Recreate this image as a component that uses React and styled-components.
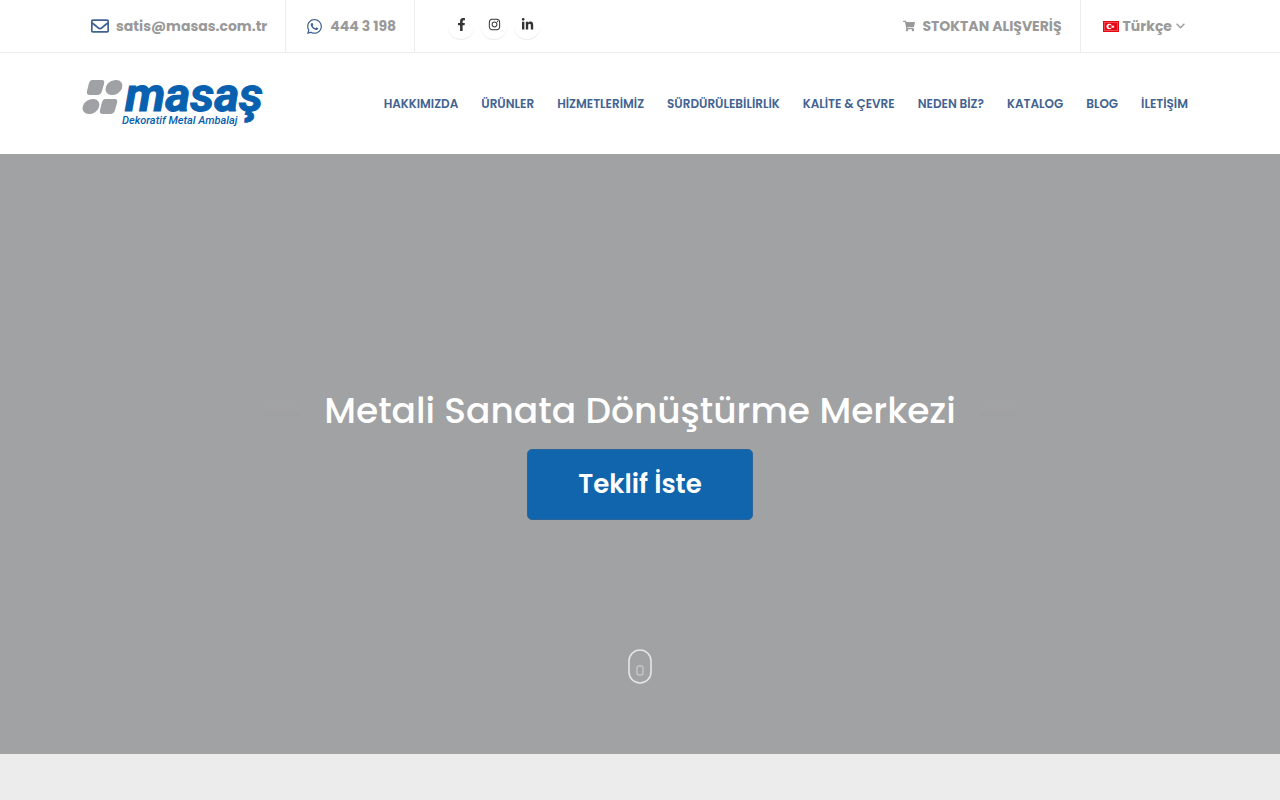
import React from "react";
import styled, { createGlobalStyle } from "styled-components";
import { FaFacebookF, FaInstagram, FaLinkedinIn, FaWhatsapp, FaRegEnvelope, FaShoppingCart } from "react-icons/fa";

const GlobalStyle = createGlobalStyle`
  *, *::before, *::after { box-sizing: border-box; }
  body {
    margin: 0;
    background: #ececec;
    font-family: Poppins, Inter, "Liberation Sans", sans-serif;
    color: #999;
  }
  a { color: inherit; text-decoration: none; }
`;

const Container = styled.div`
  display: flex;
  align-items: center;
  justify-content: space-between;
  width: 100%;
  max-width: 1140px;
  margin: 0 auto;
  padding: 0 12px;
`;

const TopBar = styled.div`
  background: #fff;
  border-bottom: 1px solid #ededed;
`;

const TopGroup = styled.div`
  display: flex;
  align-items: center;
  height: 52px;
`;

const TopLink = styled.a`
  display: flex;
  align-items: center;
  gap: 7px;
  height: 52px;
  padding: ${(p) => (p.$first ? "0 18px 0 9px" : "0 18px 0 20px")};
  border-right: 1px solid #ededed;
  font-size: 14px;
  font-weight: 700;
  line-height: 24px;
  white-space: nowrap;
  svg { color: ${(p) => p.$iconColor || "#999"}; flex: none; }
`;

const Socials = styled.div`
  display: flex;
  gap: 7px;
  margin-left: 33px;
`;

const SocialLink = styled.a`
  display: grid;
  place-items: center;
  width: 26px;
  height: 26px;
  border-radius: 50%;
  padding-bottom: 4px;
  color: #333;
  background: #fff;
  box-shadow: 0 1px 1px rgba(0, 0, 0, 0.08);
`;

const LanguageButton = styled.button`
  display: flex;
  align-items: center;
  gap: 4px;
  height: 52px;
  margin: 0;
  padding: 0 13px 0 22px;
  border: 0;
  background: none;
  color: #999;
  font: inherit;
  font-size: 14px;
  font-weight: 700;
  cursor: pointer;
`;

const Header = styled.header`
  background: #fff;
  padding: 22px 0;
`;

const LogoLink = styled.a`
  display: block;
  svg { display: block; overflow: visible; }
`;

const Nav = styled.nav`
  display: flex;
  gap: 23px;
  padding-right: 10px;
`;

const NavLink = styled.a`
  color: #426391;
  font-size: 12px;
  font-weight: 600;
  line-height: 20px;
  white-space: nowrap;
`;

const Hero = styled.section`
  display: flex;
  flex-direction: column;
  align-items: center;
  height: 600px;
  padding: 232px 20px 70px;
  background: #a1a2a3;
`;

const TitleRow = styled.div`
  display: flex;
  align-items: center;
  gap: 24px;
`;

const Dash = styled.span`
  width: 38px;
  height: 10px;
  border-radius: 2px;
  background: linear-gradient(#a3a3a5, #9fa0a2);
`;

const Title = styled.h1`
  margin: 0;
  color: #fff;
  font-size: 36px;
  font-weight: 500;
  line-height: 50px;
  text-align: center;
`;

const QuoteButton = styled.button`
  margin-top: 13px;
  padding: 0 50px;
  height: 71px;
  border: 1px solid #2b659c;
  border-radius: 5px;
  background: #1065ad;
  color: #fff;
  font: inherit;
  font-size: 26px;
  font-weight: 600;
  cursor: pointer;
`;

const ScrollLink = styled.a`
  margin-top: auto;
  svg { display: block; }
`;

const navItems = [
  "HAKKIMIZDA", "ÜRÜNLER", "HİZMETLERİMİZ", "SÜRDÜRÜLEBİLİRLİK", "KALİTE & ÇEVRE",
  "NEDEN BİZ?", "KATALOG", "BLOG", "İLETİŞİM",
];

const socials = [
  ["Facebook", FaFacebookF],
  ["Instagram", FaInstagram],
  ["LinkedIn", FaLinkedinIn],
];

function Logo() {
  return (
    <svg width="184" height="57" viewBox="0 0 184 57" role="img" aria-label="Masaş Dekoratif Metal Ambalaj">
      <g fill="#a0a1a5">
        <path d="M10 5h10q3 0 2 4l-2 7q-1 4-5 4H8q-4 0-3-4l2-8q1-3 3-3z" />
        <path d="M23 24h10q3 0 2 4l-2 7q-1 4-5 4h-7q-4 0-3-4l2-8q1-3 3-3z" />
        <ellipse cx="32" cy="12.500" rx="9" ry="7" transform="rotate(-32 32 12.500)" />
        <ellipse cx="9" cy="31.500" rx="9" ry="7" transform="rotate(-32 9 31.500)" />
      </g>
      <text x="43" y="36" fill="#0860ae" stroke="#0860ae" strokeWidth="1" fontFamily="Roboto, 'Open Sans', sans-serif" fontSize="48" fontWeight="700" fontStyle="italic">masaş</text>
      <text x="40" y="49" fill="#0860ae" fontFamily="Roboto, sans-serif" fontSize="11" fontWeight="500" fontStyle="italic">Dekoratif Metal Ambalaj</text>
    </svg>
  );
}

function TurkishFlag() {
  return (
    <svg width="16" height="11" viewBox="0 0 16 11" aria-hidden="true">
      <rect width="16" height="11" fill="#e30a17" />
      <rect x="1.500" y="1.500" width="13" height="8" fill="none" stroke="#f4474d" strokeWidth="1" />
      <circle cx="6.200" cy="5.500" r="2.700" fill="#fff" />
      <circle cx="7.100" cy="5.500" r="1.800" fill="#e8202b" />
      <path d="M10 3.800l.5 1.100 1.200.1-.9.800.3 1.200-1.100-.6-1.100.6.300-1.200-.9-.8 1.200-.1z" fill="#fff" />
    </svg>
  );
}

export default function App() {
  return (
    <>
      <GlobalStyle />
      <TopBar>
        <Container>
          <TopGroup>
            <TopLink $first $iconColor="#426391" href="mailto:satis@masas.com.tr">
              <FaRegEnvelope size={18} />satis@masas.com.tr
            </TopLink>
            <TopLink $iconColor="#426391" href="tel:4443198">
              <FaWhatsapp size={17} />444 3 198
            </TopLink>
            <Socials>
              {socials.map(([name, Icon]) => (
                <SocialLink key={name} href="#" aria-label={name}><Icon size={13} /></SocialLink>
              ))}
            </Socials>
          </TopGroup>
          <TopGroup>
            <TopLink href="#"><FaShoppingCart size={12} />STOKTAN ALIŞVERİŞ</TopLink>
            <LanguageButton type="button">
              <TurkishFlag />Türkçe
              <svg width="9" height="6" viewBox="0 0 9 6" fill="none" stroke="#999" strokeWidth="1.300" aria-hidden="true">
                <path d="M.6.700l3.900 4 3.900-4" />
              </svg>
            </LanguageButton>
          </TopGroup>
        </Container>
      </TopBar>
      <Header>
        <Container>
          <LogoLink href="#"><Logo /></LogoLink>
          <Nav>
            {navItems.map((item) => <NavLink key={item} href="#">{item}</NavLink>)}
          </Nav>
        </Container>
      </Header>
      <Hero>
        <TitleRow>
          <Dash />
          <Title>Metali Sanata Dönüştürme Merkezi</Title>
          <Dash />
        </TitleRow>
        <QuoteButton type="button">Teklif İste</QuoteButton>
        <ScrollLink href="#" aria-label="Scroll down">
          <svg width="24" height="35" viewBox="0 0 24 35" fill="none">
            <rect x="1" y="1" width="22" height="33" rx="11" stroke="#e4e5e6" strokeWidth="1.600" />
            <rect x="9" y="17" width="6" height="9" rx="2" stroke="#c6c7c8" strokeWidth="1.400" />
          </svg>
        </ScrollLink>
      </Hero>
    </>
  );
}
